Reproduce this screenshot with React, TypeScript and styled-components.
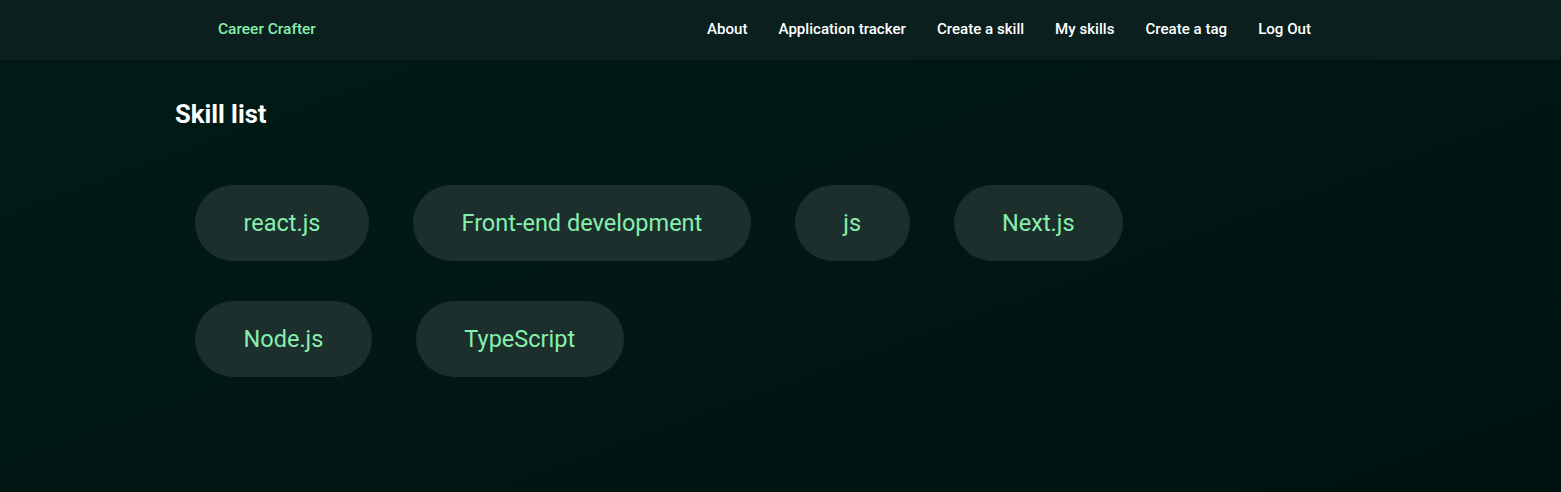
import React from "react";
import styled, { createGlobalStyle } from "styled-components";

const Global = createGlobalStyle`
  html, body { margin: 0; padding: 0; }
  body {
    background: linear-gradient(160deg, #021b17 0%, #011814 50%, #00120f 100%);
    min-height: 492px;
    font-family: Roboto, "Noto Sans", sans-serif;
    color: #ffffff;
  }
`;

const Page = styled.div`
  min-height: 492px;
  display: flex;
  flex-direction: column;
`;

const Header = styled.header`
  height: 60px;
  box-sizing: border-box;
  padding: 0 250px 2px 218px;
  background: #0a1f1e;
  box-shadow: 0 1px 2px rgba(0, 0, 0, 0.35);
  display: flex;
  align-items: center;
  justify-content: space-between;
`;

const Brand = styled.a`
  color: #86efac;
  font-size: 15.5px;
  font-weight: 500;
  text-decoration: none;
`;

const Nav = styled.nav`
  display: flex;
  gap: 31px;
`;

const NavLink = styled.a`
  color: #ffffff;
  font-size: 15.1px;
  font-weight: 500;
  text-decoration: none;
`;

const Main = styled.main`
  width: 1211px;
  margin: 0 auto;
  padding-top: 38px;
`;

const Title = styled.h1`
  margin: 0;
  font-size: 25.6px;
  font-weight: 700;
  line-height: 32px;
`;

const PillList = styled.ul`
  list-style: none;
  margin: 55px 0 0;
  padding: 0 0 0 20px;
  max-width: 1000px;
  display: flex;
  flex-wrap: wrap;
  row-gap: 40px;
  column-gap: 44px;
`;

const Pill = styled.li`
  background: #1c2f2d;
  color: #86efac;
  border-radius: 999px;
  padding: 0 48.5px;
  height: 76px;
  display: flex;
  align-items: center;
  font-size: 23.5px;
`;

const navItems = ["About", "Application tracker", "Create a skill", "My skills", "Create a tag", "Log Out"];
const skills = ["react.js", "Front-end development", "js", "Next.js", "Node.js", "TypeScript"];

export default function App() {
  return (
    <Page>
      <Global />
      <Header>
        <Brand href="#">Career Crafter</Brand>
        <Nav>
          {navItems.map((n) => (
            <NavLink key={n} href="#">{n}</NavLink>
          ))}
        </Nav>
      </Header>
      <Main>
        <Title>Skill list</Title>
        <PillList>
          {skills.map((s) => (
            <Pill key={s}>{s}</Pill>
          ))}
        </PillList>
      </Main>
    </Page>
  );
}
